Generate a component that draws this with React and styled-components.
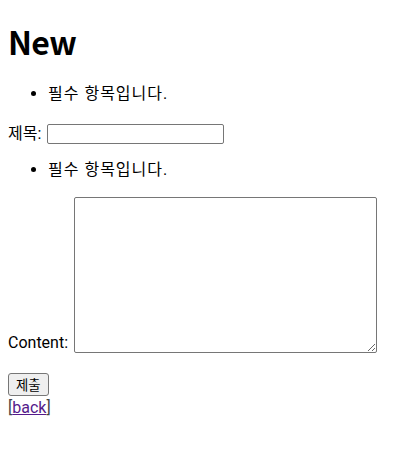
import styled, { createGlobalStyle } from "styled-components"

const GlobalStyle = createGlobalStyle`
    body {
        margin: 0;
        background: #fff;
        color: #000;
        font-family: Roboto, "Noto Sans CJK KR", sans-serif;
        font-size: 16px;
    }
`

export default function App() {
    function handleSubmit(e) {
        e.preventDefault()
    }

    return (
        <Page>
            <GlobalStyle />
            <Title>New</Title>

            <StyledForm onSubmit={handleSubmit}>
                <ErrorList>
                    <li>필수 항목입니다.</li>
                </ErrorList>
                <Row>
                    <label htmlFor="title">제목:</label>
                    <TitleInput id="title" type="text" />
                </Row>

                <ErrorList $gap={15}>
                    <li>필수 항목입니다.</li>
                </ErrorList>
                <Row $bottom>
                    <label htmlFor="content">Content:</label>
                    <ContentArea id="content" />
                </Row>

                <SubmitButton type="submit">제출</SubmitButton>
            </StyledForm>

            <Back>
                [<BackLink href="#">back</BackLink>]
            </Back>
        </Page>
    )
}

const Page = styled.div`
    padding: 0 8px;
`
const Title = styled.h1`
    margin: 20px 0 0;
    font-family: "Noto Sans CJK KR", sans-serif;
    font-size: 32px;
    font-weight: 700;
    line-height: 42px;
    letter-spacing: -0.6px;
`
const StyledForm = styled.form`
    display: flex;
    flex-direction: column;
    align-items: flex-start;
`
const ErrorList = styled.ul`
    margin: ${(p) => p.$gap ?? 21}px 0 0;
    padding-left: 40px;
    line-height: 21px;
    li {
        list-style: disc;
        letter-spacing: 1px;
    }
`
const Row = styled.div`
    display: flex;
    align-items: ${(p) => (p.$bottom ? "flex-end" : "center")};
    gap: 6px;
    margin-top: ${(p) => (p.$bottom ? 17 : 19)}px;
    line-height: 21px;
`
const TitleInput = styled.input`
    box-sizing: border-box;
    width: 177px;
    height: 20px;
    padding: 1px 2px;
    border: 1px solid #767676;
    border-radius: 2px;
    font-size: 13.33px;
`
const ContentArea = styled.textarea`
    box-sizing: border-box;
    width: 303px;
    height: 156px;
    padding: 2px;
    border: 1px solid #767676;
    border-radius: 2px;
    font-size: 13.33px;
`
const SubmitButton = styled.button`
    box-sizing: border-box;
    height: 23px;
    margin-top: 20px;
    padding: 1px 7px;
    background: #efefef;
    border: 1px solid #767676;
    border-radius: 3px;
    color: #000;
    font-family: "Noto Sans CJK KR", sans-serif;
    font-size: 13.33px;
    line-height: 19px;
`
const Back = styled.div`
    margin-top: 1px;
    line-height: 21px;
    color: #444;
`
const BackLink = styled.a`
    color: #551a8b;
`
